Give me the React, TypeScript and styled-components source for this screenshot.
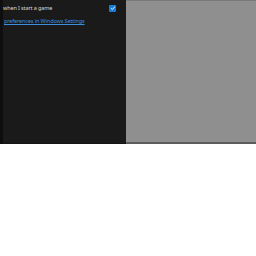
import React from "react";
import styled, { createGlobalStyle } from "styled-components";

const Global = createGlobalStyle`
  html, body { margin: 0; padding: 0; background: #ffffff; }
  body { font-family: "Noto Sans", "Open Sans", sans-serif; }
`;

const Screen = styled.div`
  display: flex;
  width: 256px;
  height: 144px;
  overflow: hidden;
`;

const Edge = styled.div`
  width: 3px;
  background: #0e0e0e;
`;

const Panel = styled.div`
  width: 123px;
  background: #1a1a1a;
  display: flex;
  flex-direction: column;
  border-bottom: 1px solid #141414;
`;

const Row = styled.div`
  display: flex;
  align-items: center;
  justify-content: space-between;
  height: 8px;
  margin-top: 4px;
  padding-right: 10px;
`;

const Label = styled.span`
  font-size: 5.5px;
  line-height: 8px;
  letter-spacing: -0.12px;
  color: #d8d8d8;
  white-space: nowrap;
`;

const Check = styled.span`
  width: 7px;
  height: 7px;
  border-radius: 1px;
  background: #1b7ad6;
  display: flex;
  align-items: center;
  justify-content: center;
`;

const Link = styled.a`
  font-size: 5.5px;
  line-height: 8px;
  letter-spacing: -0.12px;
  color: #3c8fde;
  text-decoration: underline;
  white-space: nowrap;
  margin-top: 5px;
  padding-left: 1px;
`;

const Preview = styled.div`
  flex: 1;
  background: #8f8f8f;
  border-top: 1px solid #7a7a7a;
  border-bottom: 2px solid #5c5c5c;
`;

export default function App() {
  return (
    <>
      <Global />
      <Screen>
        <Edge />
        <Panel>
          <Row>
            <Label>when I start a game</Label>
            <Check>
              <svg width="6" height="6" viewBox="0 0 6 6">
                <path d="M1 3.2 L2.4 4.5 L5 1.6" stroke="#fff" strokeWidth="0.9" fill="none" />
              </svg>
            </Check>
          </Row>
          <Link>preferences in Windows Settings</Link>
        </Panel>
        <Preview />
      </Screen>
    </>
  );
}
